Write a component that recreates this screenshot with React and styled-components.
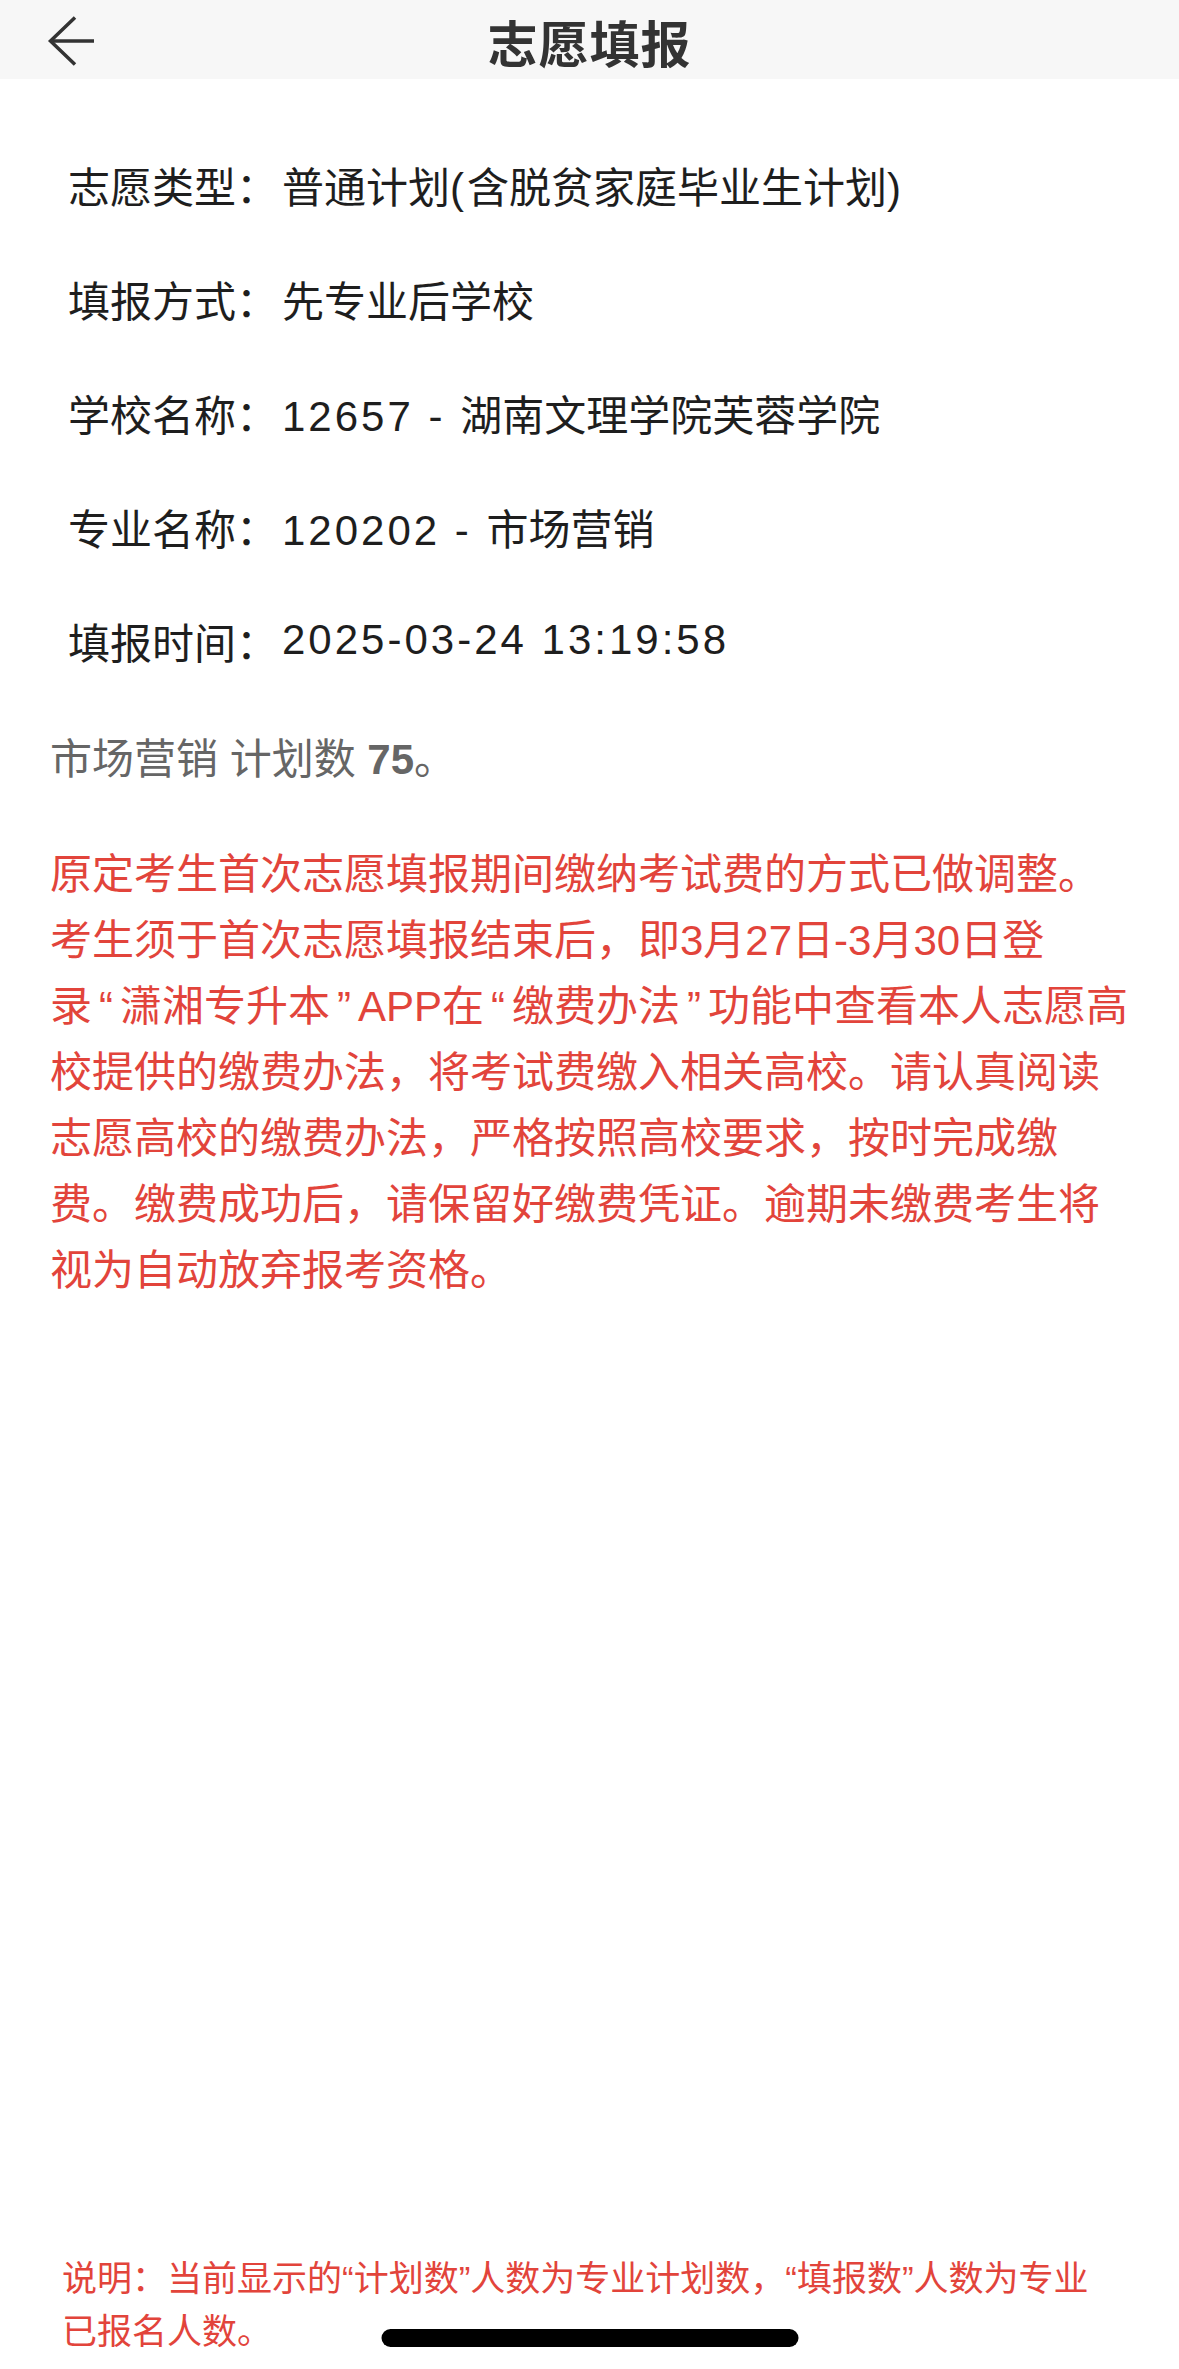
import styled, { createGlobalStyle } from "styled-components"

const GlobalStyle = createGlobalStyle`
  html, body {
    margin: 0;
    padding: 0;
    background: #fff;
  }
  body {
    font-family: "Liberation Sans", "Noto Sans CJK SC", sans-serif;
  }
`

const Page = styled.div`
  position: relative;
  min-height: 100vh;
  display: flex;
  flex-direction: column;
  background: #fff;
`

const Header = styled.header`
  height: 79px;
  padding-top: 2px;
  box-sizing: border-box;
  background: #f7f7f7;
  display: grid;
  grid-template-columns: 1fr auto 1fr;
  align-items: center;
`

const BackButton = styled.button`
  justify-self: start;
  margin-left: 47px;
  padding: 0;
  border: 0;
  background: none;
  width: 50px;
  height: 50px;
  display: flex;
  cursor: pointer;
`

const Title = styled.h1`
  margin: 0;
  font-size: 50px;
  font-weight: 700;
  color: #333;
  letter-spacing: 1px;
`

const InfoList = styled.div`
  padding: 48px 0 0 68px;
`

const InfoRow = styled.div`
  height: 114px;
  display: flex;
  align-items: center;
  font-size: 42px;
  color: #1e1e1e;
  white-space: nowrap;
`

const Value = styled.span`
  margin-left: 4px;
`

const Num = styled.span`
  letter-spacing: 3px;
`

const Summary = styled.p`
  margin: 33px 0 0 50px;
  font-size: 42px;
  line-height: 60px;
  color: #666;

  b {
    font-weight: 700;
  }
`

const Notice = styled.div`
  margin: 52px 0 0 50px;
  font-size: 42px;
  line-height: 66px;
  color: #e2443b;
`

const Line = styled.div`
  white-space: nowrap;
`

const Quote = styled.span`
  margin: 0 7px;
`

const FootNote = styled.div`
  margin-top: auto;
  padding: 0 40px 11px 62px;
  font-size: 35px;
  line-height: 53px;
  color: #e2443b;
`

const HomeIndicator = styled.div`
  position: absolute;
  left: 50%;
  bottom: 22px;
  transform: translateX(-50%);
  width: 417px;
  height: 18px;
  border-radius: 9px;
  background: #000;
`

const rows = [
  ["志愿类型：", "普通计划(含脱贫家庭毕业生计划)"],
  ["填报方式：", "先专业后学校"],
  ["学校名称：", "12657 - 湖南文理学院芙蓉学院"],
  ["专业名称：", "120202 - 市场营销"],
  ["填报时间：", "2025-03-24 13:19:58"],
]

const noticeLines = [
  "原定考生首次志愿填报期间缴纳考试费的方式已做调整。",
  "考生须于首次志愿填报结束后，即3月27日-3月30日登",
  "录“潇湘专升本”APP在“缴费办法”功能中查看本人志愿高",
  "校提供的缴费办法，将考试费缴入相关高校。请认真阅读",
  "志愿高校的缴费办法，严格按照高校要求，按时完成缴",
  "费。缴费成功后，请保留好缴费凭证。逾期未缴费考生将",
  "视为自动放弃报考资格。",
]

const footLines = [
  "说明：当前显示的“计划数”人数为专业计划数，“填报数”人数为专业",
  "已报名人数。",
]

// ascii runs in the rows are set a little wider, like the app's system font
const withNums = (text) =>
  text.split(/([\x20-\x7e]+)/).map((part, i) =>
    /^[\x20-\x7e]+$/.test(part) ? <Num key={i}>{part}</Num> : part
  )

const withQuotes = (text) =>
  text.split(/([“”])/).map((part, i) =>
    part === "“" || part === "”" ? <Quote key={i}>{part}</Quote> : part
  )

const BackArrow = () => (
  <svg width="50" height="50" viewBox="0 0 50 50" fill="none" stroke="#333" strokeWidth="3.5">
    <path d="M28 1.5 L3.5 25 L28 48.5" />
    <path d="M3.5 25 H47" />
  </svg>
)

const App = () => {
  return (
    <Page>
      <GlobalStyle />
      <Header>
        <BackButton aria-label="返回">
          <BackArrow />
        </BackButton>
        <Title>志愿填报</Title>
        <span />
      </Header>

      <InfoList>
        {rows.map(([label, value]) => (
          <InfoRow key={label}>
            {label}
            <Value>{withNums(value)}</Value>
          </InfoRow>
        ))}
      </InfoList>

      <Summary>
        市场营销 计划数 <b>75</b>。
      </Summary>

      <Notice>
        {noticeLines.map((l) => (
          <Line key={l}>{withQuotes(l)}</Line>
        ))}
      </Notice>

      <FootNote>
        {footLines.map((l) => (
          <Line key={l}>{l}</Line>
        ))}
      </FootNote>

      <HomeIndicator />
    </Page>
  )
}

export default App
